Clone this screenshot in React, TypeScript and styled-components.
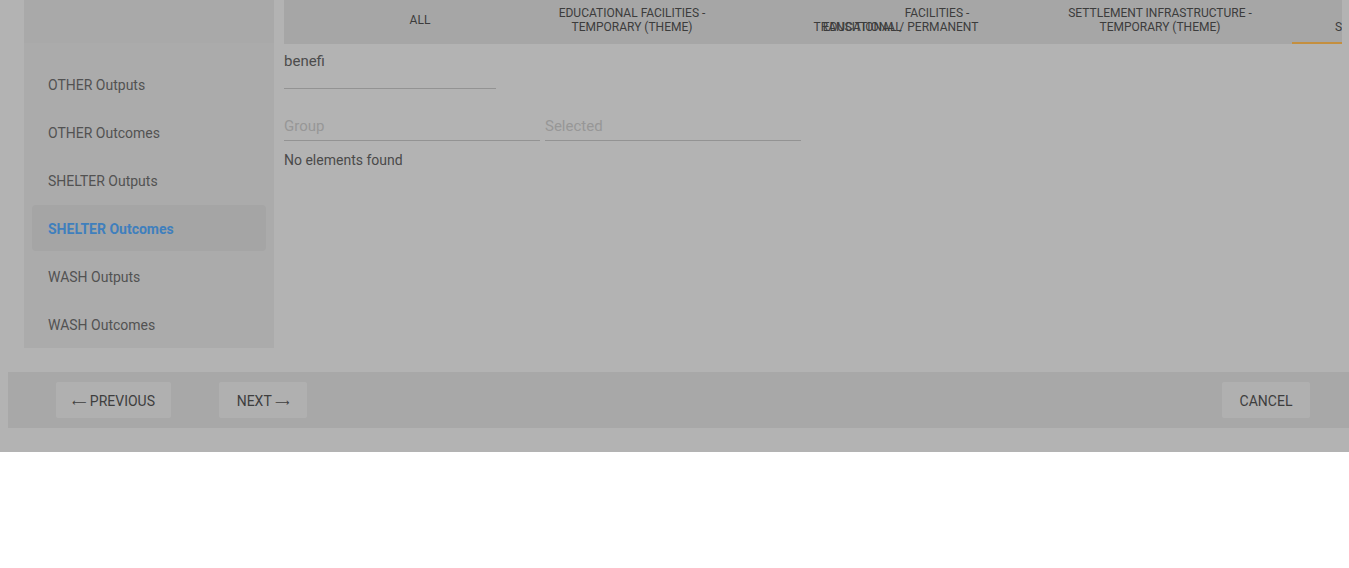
import React from "react";
import styled, { createGlobalStyle } from "styled-components";

const Global = createGlobalStyle`
  html, body { margin: 0; padding: 0; background: #ffffff; }
  body { font-family: Roboto, "Liberation Sans", Arial, sans-serif; }
  * { box-sizing: border-box; }
`;

const Page = styled.div`
  width: 1349px;
  height: 568px;
  background: #ffffff;
  overflow: hidden;
`;

const Backdrop = styled.div`
  background: #b3b3b3;
  height: 452px;
  padding: 0 0 24px 8px;
  display: flex;
  flex-direction: column;
`;

const Body = styled.div`
  display: flex;
  gap: 10px;
  padding: 0 7px 0 16px;
  height: 348px;
`;

const Sidebar = styled.nav`
  width: 250px;
  flex-shrink: 0;
  background: #ababab;
  display: flex;
  flex-direction: column;
`;

const SidebarHead = styled.div`
  height: 43px;
  background: #a9a9a9;
  margin-bottom: 17px;
`;

const Item = styled.div`
  height: 48px;
  padding: 1px 8px;
  display: flex;
`;

const ItemInner = styled.div<{ $active?: boolean }>`
  flex: 1;
  display: flex;
  align-items: center;
  padding: 1px 0 0 16px;
  border-radius: 4px;
  font-size: 14px;
  background: ${(p) => (p.$active ? "#a5a5a5" : "transparent")};
  color: ${(p) => (p.$active ? "#3f7fbd" : "#525252")};
  font-weight: ${(p) => (p.$active ? 700 : 400)};
`;

const Main = styled.main`
  flex: 1;
  min-width: 0;
  display: flex;
  flex-direction: column;
`;

const TabBar = styled.div`
  height: 44px;
  background: #a6a6a6;
  display: flex;
  overflow: hidden;
  padding-left: 56px;
`;

const Tab = styled.div<{ $w: number; $active?: boolean; $start?: number }>`
  flex-shrink: 0;
  width: ${(p) => p.$w}px;
  height: 44px;
  padding: 0 0 2px ${(p) => (p.$start ? `${p.$start}px` : "0")};
  display: flex;
  flex-direction: column;
  align-items: ${(p) => (p.$start ? "flex-start" : "center")};
  justify-content: center;
  font-size: 12px;
  line-height: 14px;
  color: #3c3c3c;
  text-transform: uppercase;
  white-space: nowrap;
  border-bottom: 2px solid ${(p) => (p.$active ? "#c48f3f" : "transparent")};
`;

const Line = styled.span`
  display: block;
`;

const Shifted = styled.span`
  display: inline-block;
  transform: translateY(14px);
`;

const SearchField = styled.div`
  width: 212px;
  height: 45px;
  border-bottom: 1px solid #939393;
  padding-top: 8px;
  font-size: 15px;
  color: #4c4c4c;
`;

const FieldRow = styled.div`
  display: flex;
  gap: 5px;
  margin-top: 27px;
`;

const Field = styled.div`
  width: 256px;
  height: 25px;
  padding-top: 1px;
  border-bottom: 1px solid #939393;
  font-size: 15px;
  color: #979797;
`;

const Empty = styled.div`
  margin-top: 11px;
  font-size: 14px;
  color: #4a4a4a;
`;

const Footer = styled.footer`
  margin-top: 24px;
  height: 56px;
  background: #a8a8a8;
  display: flex;
  align-items: center;
  gap: 48px;
  padding: 0 39px 0 48px;
`;

const Button = styled.button<{ $push?: boolean }>`
  height: 36px;
  min-width: 88px;
  padding: 2px 16px 0;
  border: none;
  border-radius: 2px;
  background: #b0b0b0;
  color: #3e3e3e;
  font-family: Roboto, "Liberation Sans", Arial, sans-serif;
  font-size: 14px;
  text-transform: uppercase;
  margin-left: ${(p) => (p.$push ? "auto" : "0")};
`;

const Arrow = styled.span`
  font-family: "DejaVu Sans", sans-serif;
  font-size: 10px;
`;

const items = [
  "OTHER Outputs",
  "OTHER Outcomes",
  "SHELTER Outputs",
  "SHELTER Outcomes",
  "WASH Outputs",
  "WASH Outcomes",
];

export default function App() {
  return (
    <Page>
      <Global />
      <Backdrop>
        <Body>
          <Sidebar>
            <SidebarHead />
            {items.map((t) => (
              <Item key={t}>
                <ItemInner $active={t === "SHELTER Outcomes"}>{t}</ItemInner>
              </Item>
            ))}
          </Sidebar>
          <Main>
            <TabBar>
              <Tab $w={160}>
                <Line>All</Line>
              </Tab>
              <Tab $w={264}>
                <Line>Educational facilities -</Line>
                <Line>Temporary (theme)</Line>
              </Tab>
              <Tab $w={264}>
                <Line>
                  <Shifted>Educational</Shifted> Facilities -
                </Line>
                <Line>Transitional / permanent</Line>
              </Tab>
              <Tab $w={264}>
                <Line>Settlement infrastructure -</Line>
                <Line>Temporary (theme)</Line>
              </Tab>
              <Tab $w={264} $start={43} $active>
                <Line>
                  <Shifted>Shelter</Shifted>
                </Line>
                <Line>&nbsp;</Line>
              </Tab>
            </TabBar>
            <SearchField>benefi</SearchField>
            <FieldRow>
              <Field>Group</Field>
              <Field>Selected</Field>
            </FieldRow>
            <Empty>No elements found</Empty>
          </Main>
        </Body>
        <Footer>
          <Button>
            <Arrow>⟵</Arrow> Previous
          </Button>
          <Button>
            Next <Arrow>⟶</Arrow>
          </Button>
          <Button $push>Cancel</Button>
        </Footer>
      </Backdrop>
    </Page>
  );
}
